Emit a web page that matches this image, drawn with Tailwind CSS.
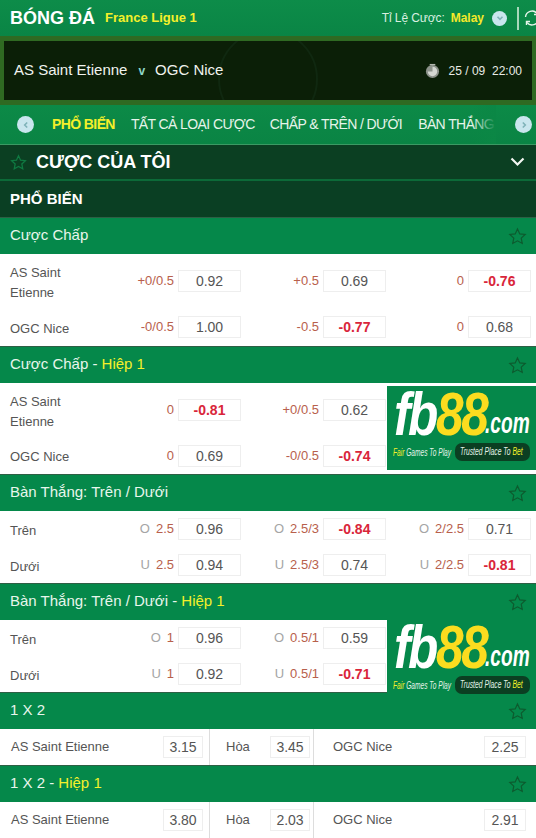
<!DOCTYPE html>
<html lang="vi">
<head>
    <meta charset="UTF-8"/>
    <meta name="viewport" content="width=device-width, initial-scale=1.0"/>
    <title>Bóng Đá – France Ligue 1</title>
    <script src="https://cdn.jsdelivr.net/npm/@tailwindcss/browser@4"></script>
</head>
<body class="bg-white font-['Liberation_Sans',Arial,sans-serif] w-[536px] h-[838px] overflow-hidden">

<!-- cabecalho -->
<header class="h-[36px] bg-gradient-to-b from-[#0d8c49] to-[#0a8545] flex items-center pl-[10px]">
    <h1 class="text-white text-[18px] font-bold">BÓNG ĐÁ</h1>
    <span class="ml-[10px] text-[#f4f02a] text-[13px] font-bold">France Ligue 1</span>
    <div class="ml-auto mr-[-4px] flex items-center h-full shrink-0">
        <span class="text-[#d9efe0] text-[12px] tracking-[-0.1px]">Tỉ Lệ Cược:</span>
        <span class="ml-[6px] text-[#f4e92a] text-[12px] font-bold">Malay</span>
        <span class="ml-[8px] w-[15px] h-[15px] rounded-full bg-[#c9e6ee] flex items-center justify-center">
            <svg class="w-[10px] h-[10px]" viewBox="0 0 10 10" fill="none" stroke="#7fb2b8" stroke-width="1.6"><path d="M2.5 3.8 5 6.3l2.5-2.5"/></svg>
        </span>
        <span class="ml-[10px] w-[2px] h-[23px] bg-[#a9d8bb]"></span>
        <svg class="ml-[5px] w-[16px] h-[16px] shrink-0" viewBox="0 0 16 16" fill="none" stroke="#e6f5ea" stroke-width="1.4"><path d="M1.500 7a6.500 6.500 0 0 1 11.500-3.500M14.500 9a6.500 6.500 0 0 1-11.500 3.500"/><path d="M13.500 1v3.500H10M2.500 15v-3.500H6"/></svg>
    </div>
</header>

<!-- banner da partida -->
<section class="h-[69px] bg-[#2f6a22] px-[4px] py-[5px]">
    <div class="relative h-full overflow-hidden bg-[#0b1f07] flex items-center pl-[10px] pr-[10px]">
        <div class="absolute left-[214px] top-[-12px] w-[100px] h-[100px] rounded-full border-2 border-[#102810]"></div>
        <span class="relative text-[#f0f3ee] text-[15px]">AS Saint Etienne</span>
        <span class="relative ml-[11px] text-[#8fd6c8] text-[12px] font-bold">v</span>
        <span class="relative ml-[10px] text-[#f0f3ee] text-[15px]">OGC Nice</span>
        <svg class="relative ml-auto w-[15px] h-[17px]" viewBox="0 0 16 18"><circle cx="8" cy="10" r="7" fill="#8d938b"/><path d="M8 10V5a5 5 0 1 1-5 5z" fill="#d5d8d2"/><path d="M5 2h6v1.500H5z" fill="#b4b8b0"/></svg>
        <span class="relative ml-[9px] text-[#e8ebe5] text-[12px]">25 / 09&nbsp; 22:00</span>
    </div>
</section>

<!-- abas -->
<nav class="relative h-[40px] bg-gradient-to-b from-[#0c8a47] to-[#0a8444] flex items-center border-b border-[#3b9a63]">
    <span class="ml-[17px] w-[17px] h-[17px] rounded-full bg-[#c9e6ee] flex items-center justify-center">
        <svg class="w-[10px] h-[10px]" viewBox="0 0 10 10" fill="none" stroke="#7fb2b8" stroke-width="1.6"><path d="M6.200 2.500 3.700 5l2.500 2.500"/></svg>
    </span>
    <div class="absolute left-[52px] top-0 h-full w-[444px] flex items-center overflow-hidden whitespace-nowrap text-[14px] tracking-[-0.6px] text-[#e6f4ea]">
        <span class="text-[#f4f02a] font-bold">PHỔ BIẾN</span>
        <span class="ml-[16px]">TẤT CẢ LOẠI CƯỢC</span>
        <span class="ml-[15px]">CHẤP &amp; TRÊN / DƯỚI</span>
        <span class="ml-[16px]">BÀN THẮNG</span>
        <div class="absolute right-0 top-0 w-[24px] h-full bg-gradient-to-r from-[#0b8745]/0 to-[#0b8745]"></div>
    </div>
    <span class="absolute left-[515px] w-[17px] h-[17px] rounded-full bg-[#c9e6ee] flex items-center justify-center">
        <svg class="w-[10px] h-[10px]" viewBox="0 0 10 10" fill="none" stroke="#7fb2b8" stroke-width="1.6"><path d="M3.800 2.500 6.300 5 3.800 7.500"/></svg>
    </span>
</nav>

<!-- cuoc cua toi -->
<div class="h-[36px] bg-[#0b3f22] flex items-center pl-[10px] pr-[11px] border-b-2 border-[#0c6a38]">
    <svg class="w-[17px] h-[17px]" viewBox="0 0 24 24" fill="none" stroke="#0f7a42" stroke-width="1.800"><path d="M12 2.500l2.900 6.200 6.800.8-5 4.600 1.300 6.700L12 17.500 6 20.800l1.300-6.700-5-4.600 6.800-.8z"/></svg>
    <span class="ml-[9px] text-white text-[18px] font-bold">CƯỢC CỦA TÔI</span>
    <svg class="ml-auto w-[15px] h-[10px]" viewBox="0 0 15 10" fill="none" stroke="#f2f6f2" stroke-width="2.200"><path d="M1.500 1.500 7.500 7.500l6-6"/></svg>
</div>
<div class="h-[36px] bg-[#0a3f23] flex items-center pl-[10px] text-white text-[15px] font-bold">PHỔ BIẾN</div>

<main id="markets"></main>

<script>
    const star = `<svg class="ml-auto w-[19px] h-[19px]" viewBox="0 0 24 24" fill="none" stroke="#0d5a2e" stroke-width="1.500"><path d="M12 2.500l2.900 6.200 6.800.8-5 4.600 1.300 6.700L12 17.500 6 20.800l1.300-6.700-5-4.600 6.800-.8z"/></svg>`;

    function head(titulo, hiep) {
        const h = hiep ? ` - <span class="text-[#f4f02a]">Hiệp 1</span>` : "";
        return `<div class="h-[37px] bg-[#05884a] border-t border-[#2e5f45] flex items-center pl-[10px] pr-[9px] text-[#e8f6ec] text-[15px]"><span class="pb-[2px]">${titulo}${h}</span>${star}</div>`;
    }

    function odd(v, cls) {
        const neg = v.startsWith("-");
        return `<span class="${cls} h-[22px] bg-white border border-[#eeeeee] flex items-center justify-center text-[14px] ${neg ? "text-[#d9253a] font-bold" : "text-[#555]"}">${v}</span>`;
    }

    function cell(c) {
        if (!c) return "<div></div>";
        const pre = c[0] ? `<span class="text-[#a5a5a5] mr-[6px]">${c[0]}</span>` : "";
        return `<div class="flex items-center justify-end gap-[4px]"><span class="text-[13px] text-[#b8604c] whitespace-nowrap">${pre}${c[1]}</span>${odd(c[2], "w-[63px]")}</div>`;
    }

    function row(r, alta) {
        return `<div class="grid grid-cols-[96px_145px_145px_145px] ${alta} items-center text-[13px] text-[#555] leading-[20px]">
            <div class="pl-[10px] pr-[20px] pt-[3px]">${r[0]}</div>${r[1].map(cell).join("")}</div>`;
    }

    /* logo desenhado com texto comprimido, por cima da ultima coluna */
    function ad(pos) {
        return `<div class="absolute ${pos} w-[149px] bg-[#05884a] overflow-hidden">
            <span class="absolute left-[7px] top-[-3px] origin-left scale-x-[.8] italic font-bold text-[62px] leading-[62px] tracking-[-3px] whitespace-nowrap text-white">fb<span class="text-[#fbdc1f]">88</span></span>
            <span class="absolute left-[98px] top-[23px] origin-left scale-x-[.66] italic font-bold text-[29px] leading-[29px] whitespace-nowrap text-white">.com</span>
            <span class="absolute left-[6px] top-[61px] origin-left scale-x-[.66] italic text-[10px] leading-[12px] whitespace-nowrap text-[#e4f3e8]"><span class="text-[#f4f02a]">Fair</span> Games To Play</span>
            <span class="absolute left-[68px] top-[57px] w-[75px] h-[18px] rounded-[7px] bg-[#0b3f22]"></span>
            <span class="absolute left-[73px] top-[60px] origin-left scale-x-[.68] italic text-[10px] leading-[12px] whitespace-nowrap text-[#e4f3e8]">Trusted Place To <span class="text-[#f4f02a]">Bet</span></span>
        </div>`;
    }

    function rowX(r) {
        return `<div class="h-[36px] grid grid-cols-[209px_104px_223px] text-[13px] text-[#555]">
            <div class="flex items-center justify-between pl-[11px] pr-[6px]"><span>${r[0]}</span>${odd(r[1], "w-[40px]")}</div>
            <div class="flex items-center justify-between pl-[16px] pr-[3px] border-l border-[#ddd]"><span>Hòa</span>${odd(r[2], "w-[40px]")}</div>
            <div class="flex items-center justify-between pl-[19px] pr-[10px] border-l border-[#ddd]"><span>OGC Nice</span>${odd(r[3], "w-[42px]")}</div>
        </div>`;
    }

    const html = [
        head("Cược Chấp"),
        row(["AS Saint Etienne", [["", "+0/0.5", "0.92"], ["", "+0.5", "0.69"], ["", "0", "-0.76"]]], "h-[54px]"),
        row(["OGC Nice", [["", "-0/0.5", "1.00"], ["", "-0.5", "-0.77"], ["", "0", "0.68"]]], "h-[38px]"),
        head("Cược Chấp", true),
        `<div class="relative">`,
        row(["AS Saint Etienne", [["", "0", "-0.81"], ["", "+0/0.5", "0.62"], null]], "h-[54px]"),
        row(["OGC Nice", [["", "0", "0.69"], ["", "-0/0.5", "-0.74"], null]], "h-[37px]"),
        ad("left-[387px] top-[3px] h-[84px]"),
        `</div>`,
        head("Bàn Thắng: Trên / Dưới"),
        row(["Trên", [["O", "2.5", "0.96"], ["O", "2.5/3", "-0.84"], ["O", "2/2.5", "0.71"]]], "h-[36px]"),
        row(["Dưới", [["U", "2.5", "0.94"], ["U", "2.5/3", "0.74"], ["U", "2/2.5", "-0.81"]]], "h-[36px]"),
        head("Bàn Thắng: Trên / Dưới", true),
        `<div class="relative z-10">`,
        row(["Trên", [["O", "1", "0.96"], ["O", "0.5/1", "0.59"], null]], "h-[36px]"),
        row(["Dưới", [["U", "1", "0.92"], ["U", "0.5/1", "-0.71"], null]], "h-[36px]"),
        ad("left-[387px] top-[-1px] h-[76px]"),
        `</div>`,
        head("1 X 2"),
        rowX(["AS Saint Etienne", "3.15", "3.45", "2.25"]),
        head("1 X 2", true),
        rowX(["AS Saint Etienne", "3.80", "2.03", "2.91"]),
    ].join("");
    document.getElementById("markets").innerHTML = html;
</script>
</body>
</html>
